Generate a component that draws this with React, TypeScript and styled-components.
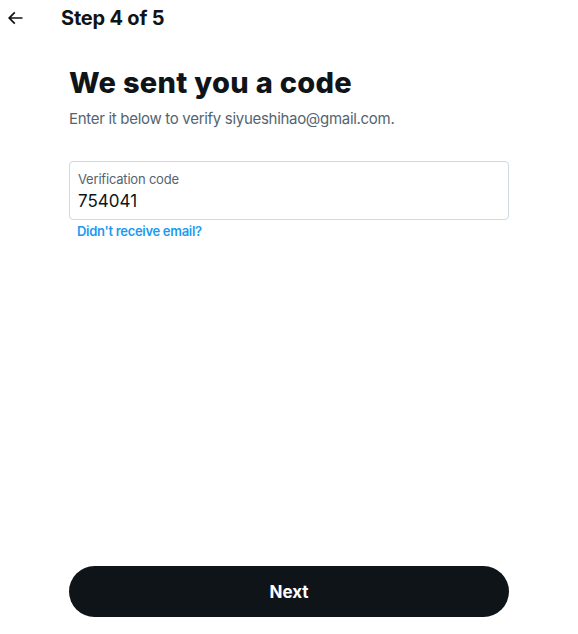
import React from "react";
import styled, { createGlobalStyle } from "styled-components";

const GlobalStyle = createGlobalStyle`
  html, body {
    margin: 0;
    padding: 0;
    background: #ffffff;
  }
  body {
    font-family: Inter, "Noto Sans", "Liberation Sans", sans-serif;
    color: #0f1419;
    -webkit-font-smoothing: antialiased;
  }
`;

const Page = styled.div`
  width: 578px;
  height: 634px;
  display: flex;
  flex-direction: column;
  background: #fff;
  box-sizing: border-box;
`;

const Header = styled.header`
  height: 36px;
  display: flex;
  align-items: center;
  gap: 36px;
  padding-left: 5px;
`;

const BackButton = styled.button`
  width: 20px;
  height: 36px;
  border: none;
  background: transparent;
  padding: 0;
  display: flex;
  align-items: center;
  justify-content: center;
  color: #0f1419;
  cursor: pointer;
`;

const HeaderTitle = styled.h2`
  margin: 0;
  font-size: 20px;
  font-weight: 700;
  line-height: 24px;
  letter-spacing: -0.2px;
  color: #0f1419;
`;

const Content = styled.main`
  flex: 1;
  display: flex;
  flex-direction: column;
  padding: 29px 69px 0 69px;
`;

const Title = styled.h1`
  margin: 0;
  font-size: 29px;
  font-weight: 800;
  line-height: 36px;
  letter-spacing: 0.3px;
  color: #0f1419;
`;

const Subtitle = styled.p`
  margin: 8px 0 0 0;
  font-size: 15px;
  line-height: 20px;
  letter-spacing: -0.3px;
  color: #536471;
`;

const Field = styled.label`
  margin-top: 32px;
  display: flex;
  flex-direction: column;
  height: 59px;
  box-sizing: border-box;
  border: 1px solid #cfd9de;
  border-radius: 4px;
  padding: 9px 8px 0 8px;
`;

const FieldLabel = styled.span`
  font-size: 13px;
  line-height: 16px;
  letter-spacing: -0.2px;
  color: #536471;
`;

const FieldValue = styled.span`
  margin-top: 2px;
  font-size: 17px;
  line-height: 24px;
  color: #0f1419;
`;

const HelpLink = styled.a`
  margin-top: 3px;
  padding-left: 8px;
  font-size: 13px;
  font-weight: 600;
  line-height: 16px;
  letter-spacing: -0.3px;
  color: #1d9bf0;
  text-decoration: none;
  cursor: pointer;
`;

const Footer = styled.footer`
  padding: 0 69px 17px 69px;
`;

const NextButton = styled.button`
  width: 100%;
  height: 51px;
  border: none;
  border-radius: 9999px;
  background: #0f1419;
  color: #ffffff;
  font-family: inherit;
  font-size: 17px;
  font-weight: 700;
  cursor: pointer;
`;

const BackArrow = () => (
  <svg width="20" height="20" viewBox="0 0 24 24" fill="currentColor" aria-hidden="true">
    <path d="M7.414 13l5.043 5.04-1.414 1.42L3.586 12l7.457-7.46 1.414 1.42L7.414 11H21v2H7.414z" />
  </svg>
);

export default function App() {
  return (
    <>
      <GlobalStyle />
      <Page>
        <Header>
          <BackButton aria-label="Back">
            <BackArrow />
          </BackButton>
          <HeaderTitle>Step 4 of 5</HeaderTitle>
        </Header>
        <Content>
          <Title>We sent you a code</Title>
          <Subtitle>Enter it below to verify siyueshihao@gmail.com.</Subtitle>
          <Field>
            <FieldLabel>Verification code</FieldLabel>
            <FieldValue>754041</FieldValue>
          </Field>
          <HelpLink>Didn't receive email?</HelpLink>
        </Content>
        <Footer>
          <NextButton>Next</NextButton>
        </Footer>
      </Page>
    </>
  );
}
